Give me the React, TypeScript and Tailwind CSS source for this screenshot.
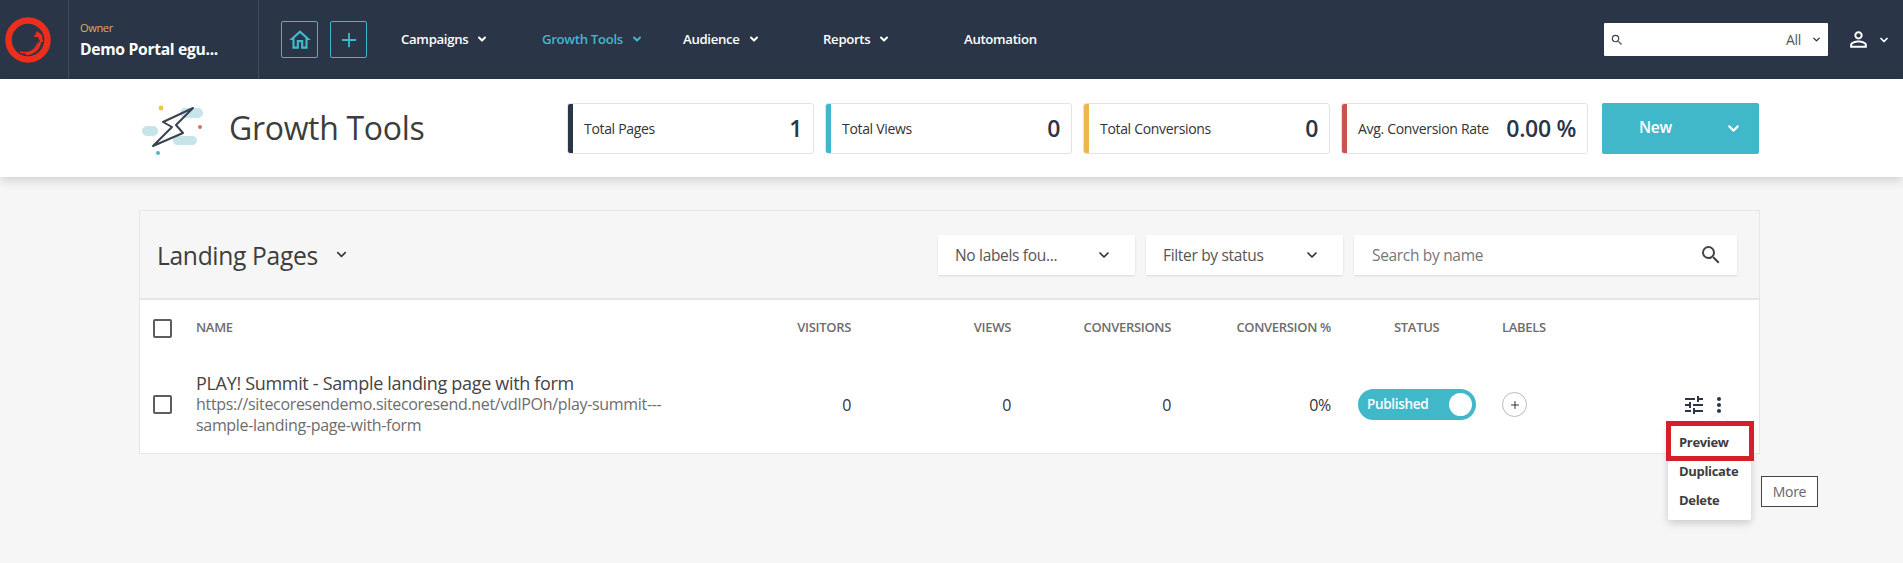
import { ChevronDown, Plus } from "lucide-react";
import { MdMoreVert, MdOutlineHome, MdPersonOutline, MdSearch, MdTune } from "react-icons/md";

const NAV = [
  { label: "Campaigns", width: "w-[141px]", caret: true },
  { label: "Growth Tools", width: "w-[141px]", caret: true, active: true },
  { label: "Audience", width: "w-[140px]", caret: true },
  { label: "Reports", width: "w-[141px]", caret: true },
  { label: "Automation", width: "w-[120px]", caret: false },
];

const STATS = [
  { label: "Total Pages", value: "1", bar: "bg-[#2a3547]" },
  { label: "Total Views", value: "0", bar: "bg-[#41b8ca]" },
  { label: "Total Conversions", value: "0", bar: "bg-[#ecb84e]" },
  { label: "Avg. Conversion Rate", value: "0.00 %", bar: "bg-[#c9534f]" },
];

function SitecoreLogo() {
  return (
    <svg width="46" height="46" viewBox="0 0 46 46" fill="none">
      <circle cx="23" cy="23" r="19.5" stroke="#eb2f1c" strokeWidth="6.5" />
      <path d="M15 35c8 2.5 15-1 18-9" stroke="#eb2f1c" strokeWidth="1.4" />
      <path d="M21 37c7 0 13-5 14-12" stroke="#eb2f1c" strokeWidth="2.4" />
      <path d="M32 14l5 4 1 7-3 0-2-5-4 0z" fill="#eb2f1c" />
    </svg>
  );
}

function BoltIllustration() {
  return (
    <svg width="64" height="56" viewBox="0 0 64 56" fill="none">
      <rect x="41" y="8" width="23" height="10" rx="5" fill="#c5e5ea" />
      <rect x="3" y="26" width="16" height="10" rx="5" fill="#c5e5ea" />
      <rect x="34" y="36" width="24" height="9" rx="4.5" fill="#c5e5ea" />
      <circle cx="22" cy="8" r="2.4" fill="#f5c344" />
      <circle cx="61" cy="27" r="2" fill="#de6c66" />
      <circle cx="19" cy="53" r="2" fill="#55b3c6" />
      <path d="M54 8 L24 22 L33 27 L14 46 L44 33 L37 25 Z" stroke="#3a4250" strokeWidth="2" strokeLinejoin="round" />
    </svg>
  );
}

function FilterBox({ label }: { label: string }) {
  return (
    <div className="flex h-10 w-[197px] items-center justify-between bg-white pl-[17px] pr-[23px] text-[15.5px] text-[#555] shadow-[0_1px_2px_rgba(0,0,0,0.12)]">
      <span className="pt-[3px]">{label}</span>
      <ChevronDown size={16} strokeWidth={2.5} className="text-[#333]" />
    </div>
  );
}

export default function App() {
  return (
    <div className="relative h-[563px] overflow-hidden bg-[#f6f6f6] font-['Open_Sans',sans-serif] tracking-[-0.02em] text-[#333]">
      {/* Top nav */}
      <header className="flex h-[79px] items-center bg-[#2a3547]">
        <div className="flex h-full w-[69px] items-center justify-center border-r border-[#3f4a5b] pr-[12px]">
          <SitecoreLogo />
        </div>
        <div className="flex h-full w-[190px] flex-col justify-center border-r border-[#3f4a5b] pl-[11px]">
          <div className="text-[11px] leading-[14px] text-[#e0ac5c]">Owner</div>
          <div className="mt-[4px] text-[15.7px] leading-[20px] font-bold text-white">Demo Portal egu...</div>
        </div>
        <div className="ml-[22px] flex gap-[12px]">
          <div className="flex h-[37px] w-[37px] items-center justify-center rounded-[2px] border border-[#41b8ca] text-[#41b8ca]">
            <MdOutlineHome size={26} />
          </div>
          <div className="flex h-[37px] w-[37px] items-center justify-center rounded-[2px] border border-[#41b8ca] text-[#41b8ca]">
            <Plus size={22} strokeWidth={2} />
          </div>
        </div>
        <nav className="ml-[34px] flex items-center">
          {NAV.map((item) => (
            <div key={item.label} className={`flex items-center gap-[8px] text-[13.2px] font-semibold ${item.width} ${item.active ? "text-[#41b8ca]" : "text-white"}`}>
              {item.label}
              {item.caret && <ChevronDown size={12} strokeWidth={4} />}
            </div>
          ))}
        </nav>
        <div className="ml-auto flex h-[33px] w-[224px] items-center rounded-[1px] bg-white pl-[6px] pr-[6px]">
          <MdSearch size={14} className="text-[#444]" />
          <span className="ml-auto text-[14px] text-[#555]">All</span>
          <ChevronDown size={11} strokeWidth={3} className="ml-[10px] text-[#333]" />
        </div>
        <div className="ml-[18px] mr-[13px] flex items-center gap-[7px] text-white">
          <MdPersonOutline size={25} />
          <ChevronDown size={12} strokeWidth={3.5} />
        </div>
      </header>

      {/* Page heading */}
      <section className="flex h-[98px] items-center bg-white pl-[139px] shadow-[0_3px_10px_rgba(0,0,0,0.16)]">
        <BoltIllustration />
        <h1 className="ml-[26px] w-[200px] text-[32px] whitespace-nowrap text-[#3d3d3d]">Growth Tools</h1>
        <div className="ml-[138px] flex gap-[11px]">
          {STATS.map((s) => (
            <div key={s.label} className="flex h-[51px] w-[247px] overflow-hidden rounded-[3px] border border-[#e3e3e3] bg-white">
              <div className={`w-[5px] ${s.bar}`} />
              <div className="flex flex-1 items-center justify-between pl-[11px] pr-[11px]">
                <span className="text-[14px] text-[#333]">{s.label}</span>
                <span className="text-[23px] font-semibold text-[#2a3547]">{s.value}</span>
              </div>
            </div>
          ))}
        </div>
        <div className="ml-[14px] flex h-[51px] w-[157px] items-center justify-between rounded-[2px] bg-[#41b8ca] pl-[37px] pr-[17px] text-[15.5px] font-semibold text-white">
          New
          <ChevronDown size={17} strokeWidth={3} />
        </div>
      </section>

      {/* Landing pages panel */}
      <main className="mx-[139px] mt-[33px] w-[1621px] border border-[#e6e6e6]">
        <div className="flex h-[89px] items-center border-b-2 border-[#e6e6e6] bg-[#f6f6f6] pl-[17px] pr-[22px]">
          <h2 className="pt-[3px] text-[24.6px] text-[#3d3d3d]">Landing Pages</h2>
          <ChevronDown size={15} strokeWidth={2.5} className="ml-[16px]" />
          <div className="ml-auto flex gap-[11px]">
            <FilterBox label="No labels fou..." />
            <FilterBox label="Filter by status" />
            <div className="flex h-10 w-[383px] items-center justify-between bg-white pl-[18px] pr-[14px] text-[15.5px] text-[#777] shadow-[0_1px_2px_rgba(0,0,0,0.12)]">
              <span className="pt-[3px]">Search by name</span>
              <MdSearch size={24} className="text-[#444]" />
            </div>
          </div>
        </div>

        <div className="bg-white">
          <div className="grid h-[56px] grid-cols-[56px_495px_160px_160px_160px_160px_171px_1fr] items-center text-[13px] font-semibold text-[#6d6d6d]">
            <div className="pl-[13px]"><div className="h-[19px] w-[19px] rounded-[2px] border-[2.5px] border-[#5d5d5d]" /></div>
            <div>NAME</div>
            <div className="text-right">VISITORS</div>
            <div className="text-right">VIEWS</div>
            <div className="text-right">CONVERSIONS</div>
            <div className="text-right">CONVERSION %</div>
            <div className="pl-[63px]">STATUS</div>
            <div>LABELS</div>
          </div>
          <div className="grid h-[97px] grid-cols-[56px_495px_160px_160px_160px_160px_171px_1fr] items-center">
            <div className="pl-[13px]"><div className="h-[19px] w-[19px] rounded-[2px] border-2 border-[#5d5d5d]" /></div>
            <div>
              <div className="text-[18px] leading-[21px] whitespace-nowrap text-[#444]">PLAY! Summit - Sample landing page with form</div>
              <div className="text-[16px] leading-[21px] text-[#6d6d6d]">https://sitecoresendemo.sitecoresend.net/vdlPOh/play-summit---sample-landing-page-with-form</div>
            </div>
            <div className="text-right text-[16px]">0</div>
            <div className="text-right text-[16px]">0</div>
            <div className="text-right text-[16px]">0</div>
            <div className="text-right text-[16px]">0%</div>
            <div className="pl-[27px]">
              <div className="flex h-[31px] w-[118px] items-center justify-between rounded-full bg-[#41b8ca] pl-[9px] pr-[4px] text-[13.5px] font-semibold text-white">
                Published
                <div className="h-[23px] w-[23px] rounded-full bg-white" />
              </div>
            </div>
            <div className="flex items-center justify-between pr-[28px]">
              <div className="flex h-[25px] w-[25px] items-center justify-center rounded-full border border-[#bbb] text-[#333]">
                <Plus size={12} strokeWidth={2} />
              </div>
              <div className="flex items-center gap-[1px] text-[#2a3547]">
                <MdTune size={24} />
                <MdMoreVert size={24} />
              </div>
            </div>
          </div>
        </div>
      </main>

      {/* Actions menu, open over the row */}
      <div className="absolute left-[1713px] top-[415px] h-[12px] w-[12px] rotate-45 bg-white shadow-[0_0_3px_rgba(0,0,0,0.12)]" />
      <div className="absolute left-[1668px] top-[424px] w-[83px] rounded-[2px] bg-white pb-[5px] pt-[4px] pl-[11px] text-[13px] leading-[29px] font-bold text-[#3d3d3d] shadow-[0_3px_8px_rgba(0,0,0,0.18)]">
        <div>Preview</div>
        <div>Duplicate</div>
        <div>Delete</div>
      </div>
      <div className="absolute left-[1666px] top-[421px] h-[40px] w-[88px] border-[5px] border-[#d5202c]" />
      <div className="absolute left-[1761px] top-[476px] flex h-[31px] w-[57px] items-center justify-center border border-[#444] bg-white text-[14px] text-[#666]">More</div>
    </div>
  );
}
